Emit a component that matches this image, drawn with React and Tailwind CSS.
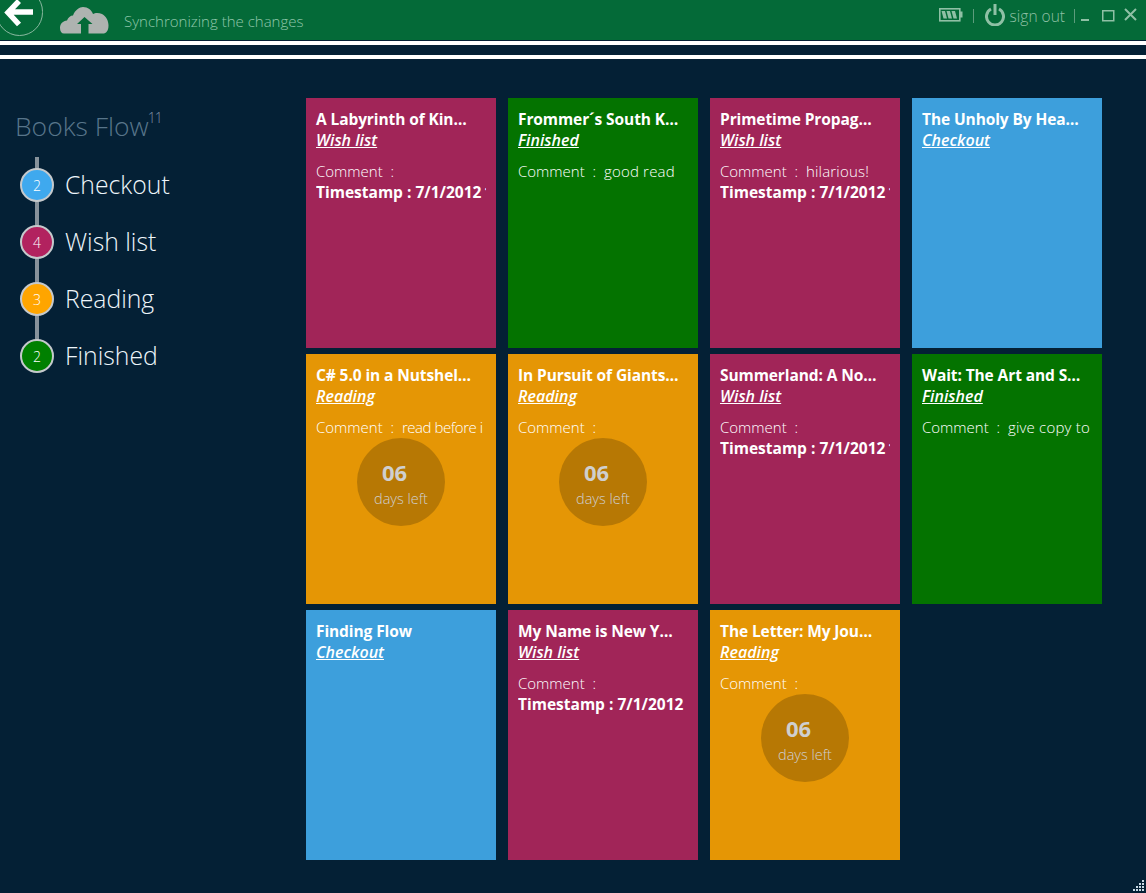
const F = "font-['Open_Sans','Noto_Sans',sans-serif]";

const MAGENTA = "bg-[#a12558]";
const GREEN = "bg-[#047300]";
const BLUE = "bg-[#3d9fdc]";
const ORANGE = "bg-[#e59605]";
const TS = "Timestamp : 7/1/2012\u200912:00 AM";

const books = [
  { t: "A Labyrinth of Kin…", s: "Wish list", c: MAGENTA, comment: "", ts: TS },
  { t: "Frommer´s South K…", s: "Finished", c: GREEN, comment: "good read" },
  { t: "Primetime Propag…", s: "Wish list", c: MAGENTA, comment: "hilarious!", ts: TS },
  { t: "The Unholy By Hea…", s: "Checkout", c: BLUE, noComment: true },
  { t: "C# 5.0 in a Nutshel…", s: "Reading", c: ORANGE, comment: "read before i return it", tight: true, days: true },
  { t: "In Pursuit of Giants…", s: "Reading", c: ORANGE, comment: "", days: true },
  { t: "Summerland: A No…", s: "Wish list", c: MAGENTA, comment: "", ts: TS },
  { t: "Wait: The Art and S…", s: "Finished", c: GREEN, comment: "give copy to friends" },
  { t: "Finding Flow", s: "Checkout", c: BLUE, noComment: true },
  { t: "My Name is New Y…", s: "Wish list", c: MAGENTA, comment: "", ts: "Timestamp : 7/1/2012" },
  { t: "The Letter: My Jou…", s: "Reading", c: ORANGE, comment: "", days: true },
];

const flows = [
  { n: 2, label: "Checkout", c: "bg-[#3fa9ee]" },
  { n: 4, label: "Wish list", c: "bg-[#b2225f]" },
  { n: 3, label: "Reading", c: "bg-[#ffa500]" },
  { n: 2, label: "Finished", c: "bg-[#008000]" },
];

function Card({ b }) {
  return (
    <div className={`${b.c} h-[250px] pt-[10px] px-[10px] text-white flex flex-col`}>
      <div className="whitespace-nowrap text-[15.5px] leading-[22px] font-bold tracking-[-0.1px]">
        {b.t}
      </div>
      <div className="text-[16px] leading-[20px] italic font-semibold underline">{b.s}</div>
      {!b.noComment && (
        <div className="mt-[11px] h-[21px] leading-[21px] text-[15px] font-light whitespace-pre overflow-hidden">
          Comment{"  :  "}
          <span className={b.tight ? "tracking-[-0.45px]" : "tracking-[0.2px]"}>{b.comment}</span>
        </div>
      )}
      {b.ts && (
        <div className="text-[15.5px] leading-[21px] font-bold whitespace-pre overflow-hidden">{b.ts}</div>
      )}
      {b.days && (
        <div className="self-center w-[88px] h-[88px] rounded-full bg-black/20 flex flex-col items-center pt-[20px] text-[#cfcfcf]">
          <div className="text-[22px] leading-[28px] font-bold pr-[13px]">06</div>
          <div className="text-[14.5px] leading-[26px] font-light">days left</div>
        </div>
      )}
    </div>
  );
}

function Cloud() {
  return (
    <svg width="49" height="27" viewBox="0 0 49 27">
      <path
        d="M4 26.5 C1.5 26.5 0 24.5 0 21 C0 16.5 3 14 7 13.5 C8 10.5 10.5 8.5 13 8.5 C15 3 19.5 0 23 0 C28 0 31.5 3 33 7 C35 5.5 39 5.5 42 7 C46.5 9.5 48.5 14 48.5 18.5 C48.5 24 46 26.5 43 26.5 Z"
        fill="#aeb3b0"
      />
      <path d="M24.5 10 L32.5 17 L28.5 17 L28.5 27 L21 27 L21 17 L17 17 Z" fill="#046a38" />
    </svg>
  );
}

function Battery() {
  return (
    <svg width="24" height="14" viewBox="0 0 24 14">
      <rect x="0.8" y="0.8" width="20" height="12" fill="none" stroke="#8fc0a5" strokeWidth="1.6" />
      <rect x="21" y="3.5" width="2.5" height="6" fill="#8fc0a5" />
      <path d="M2.5 3 H6 L8 10.5 H4.5 Z M7.5 3 H11 L13 10.5 H9.5 Z M12.5 3 H16 L18 10.5 H14.5 Z" fill="#8fc0a5" />
    </svg>
  );
}

function Power() {
  return (
    <svg width="20" height="22" viewBox="0 0 20 22" fill="none" stroke="#8fc0a5" strokeWidth="3">
      <path d="M6 5 A8.5 8.5 0 1 0 14 5" />
      <path d="M10 0 V11" />
    </svg>
  );
}

function Header() {
  return (
    <div className="h-[41px] bg-[#046a38] flex items-center overflow-hidden border-b border-[#042035]">
      <div className="-mt-[16px] -ml-[4px] w-[47px] h-[48px] shrink-0 rounded-full border-[1.5px] border-[#8ab9a0] flex items-center justify-center">
        <svg width="30" height="28" viewBox="0 0 30 28" className="mt-[1px] mr-[2px]">
          <path d="M15 2 L4 13.5 L15 25.5 M6 13 H29" fill="none" stroke="#fff" strokeWidth="5.5" />
        </svg>
      </div>
      <div className="ml-[17px] flex"><Cloud /></div>
      <div className="ml-[15px] mt-[3px] text-[15px] font-light text-[#8fc6aa]">Synchronizing the changes</div>
      <div className="ml-auto flex items-center text-[#8fc0a5]">
        <div className="-mt-[10px] flex"><Battery /></div>
        <div className="ml-[10px] -mt-[9px] w-px h-[14px] bg-[#5c9c7c]" />
        <div className="ml-[11px] -mt-[11px] flex"><Power /></div>
        <div className="ml-[5px] text-[15.5px] font-light -mt-[6px]">sign out</div>
        <div className="ml-[9px] -mt-[9px] w-px h-[14px] bg-[#5c9c7c]" />
        <svg width="58" height="16" viewBox="0 0 58 16" className="ml-[6px] mr-[7px] -mt-[8px]" fill="none" stroke="#8fc0a5">
          <path d="M0 12 H8" strokeWidth="2" />
          <rect x="21.75" y="2.75" width="11" height="10" strokeWidth="1.5" />
          <path d="M44 1 L55 12 M55 1 L44 12" strokeWidth="2" />
        </svg>
      </div>
    </div>
  );
}

function Sidebar() {
  return (
    <div className="w-[306px] shrink-0 pt-[43px] pl-[15px]">
      <div className="text-[26.5px] leading-[48px] font-light text-[#58758a] flex items-start">
        Books Flow
        <span className="text-[14px] leading-[18px] -ml-[1px] mt-[7px] tracking-[-1px] text-[#7f95a5]">11</span>
      </div>
      <div className="relative mt-[7px] -ml-[15px] pt-[11px]">
        <div className="absolute left-[35px] top-0 h-[200px] w-[4px] bg-[#87929b]" />
        <div className="flex flex-col gap-[23px]">
          {flows.map((f) => (
            <div key={f.label} className="relative flex items-center h-[34px] pl-[20px]">
              <div className={`${f.c} w-[34px] h-[34px] rounded-full border-[2px] border-[#c5c9cc] flex items-center justify-center text-white text-[14px] font-light`}>
                {f.n}
              </div>
              <div className="ml-[11px] text-[24.75px] font-light text-[#eef6fb]">{f.label}</div>
            </div>
          ))}
        </div>
      </div>
    </div>
  );
}

export default function App() {
  return (
    <div className={`${F} relative w-[1146px] h-[893px] bg-[#042035] overflow-hidden`}>
      <Header />
      <div className="h-[4px] bg-white" />
      <div className="h-[10px]" />
      <div className="h-[4px] bg-white" />
      <div className="flex">
        <Sidebar />
        <div className="pt-[39px] grid grid-cols-[repeat(4,190px)] gap-x-[12px] gap-y-[6px] content-start">
          {books.map((b) => <Card key={b.t} b={b} />)}
        </div>
      </div>
      <svg width="12" height="12" viewBox="0 0 12 12" className="absolute right-[1px] bottom-[1px]" fill="#c8d8e4">
        {[[9,0],[6,3],[9,3],[3,6],[6,6],[9,6],[0,9],[3,9],[6,9],[9,9]].map(([x,y]) => (
          <rect key={`${x}-${y}`} x={x} y={y} width="2" height="2" />
        ))}
      </svg>
    </div>
  );
}
